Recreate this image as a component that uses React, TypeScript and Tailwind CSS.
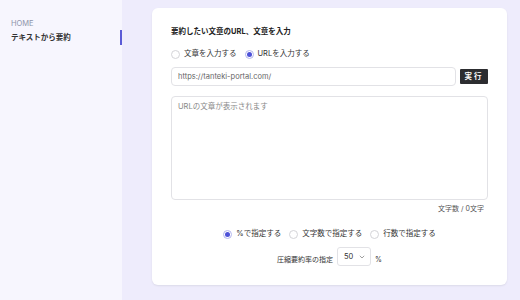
import React, { useState } from 'react';

const FONT = { fontFamily: '"Inter", "Noto Sans CJK JP", sans-serif' };

const Radio = ({ checked, label, onClick }: { checked: boolean; label: string; onClick: () => void }) => (
  <label className="flex items-center gap-[4px] cursor-pointer" onClick={onClick}>
    <span
      className={`w-[9px] h-[9px] rounded-full border flex items-center justify-center bg-white ${
        checked ? 'border-[#b3b5ee]' : 'border-[#d4d4d8]'
      }`}
    >
      {checked && <span className="w-[5px] h-[5px] rounded-full bg-[#4e52d8]" />}
    </span>
    <span className="text-[7.5px] text-[#333]">{label}</span>
  </label>
);

export default function App() {
  const [mode, setMode] = useState<'text' | 'url'>('url');
  const [unit, setUnit] = useState<'pct' | 'chars' | 'lines'>('pct');

  return (
    <div className="flex w-[520px] h-[300px] bg-[#eeecfc]" style={FONT}>
      {/* Sidebar */}
      <aside className="w-[122px] h-full bg-[#f7f6fe] pt-[19px] flex flex-col">
        <div className="pl-[11px] text-[7.5px] leading-[10px] text-[#8e94aa]">HOME</div>
        <div className="relative mt-[1px] h-[15px] flex items-center">
          <span className="pl-[11px] text-[7.5px] font-semibold text-[#333]">テキストから要約</span>
          <span className="absolute right-0 top-0 w-[2px] h-[15px] bg-[#5b5bd6]" />
        </div>
      </aside>

      {/* Main */}
      <main className="flex-1 pl-[30px] pt-[8px]">
        <div className="w-[355px] h-[277px] bg-white rounded-[6px] shadow-[0_1px_2px_rgba(0,0,0,0.08)] px-[19px] pt-[18px]">
          <h2 className="text-[7.5px] leading-[12px] font-bold text-[#222]">要約したい文章のURL、文章を入力</h2>

          <div className="flex items-center gap-[8px] mt-[11px] h-[10px]">
            <Radio checked={mode === 'text'} label="文章を入力する" onClick={() => setMode('text')} />
            <Radio checked={mode === 'url'} label="URLを入力する" onClick={() => setMode('url')} />
          </div>

          <div className="flex items-center gap-[4px] mt-[8px]">
            <input
              type="text"
              defaultValue="https://tanteki-portal.com/"
              className="w-[285px] h-[19px] border border-[#e2e2e6] rounded-[4px] px-[6px] text-[7.5px] text-[#666] outline-none"
            />
            <button className="w-[28px] h-[15px] bg-[#2c2d30] text-white text-[7.5px] font-semibold tracking-[2px] rounded-[1px] flex items-center justify-center">
              実行
            </button>
          </div>

          <textarea
            placeholder="URLの文章が表示されます"
            className="block w-[317px] h-[104px] mt-[10px] border border-[#e2e2e6] rounded-[4px] px-[6px] py-[4px] text-[7.5px] placeholder:text-[#888] outline-none resize-none"
          />

          <div className="text-right pr-[4px] mt-[4px] text-[7px] leading-[10px] text-[#555]">文字数 / 0文字</div>

          <div className="flex justify-center items-center gap-[8px] mt-[15px] h-[10px]">
            <Radio checked={unit === 'pct'} label="%で指定する" onClick={() => setUnit('pct')} />
            <Radio checked={unit === 'chars'} label="文字数で指定する" onClick={() => setUnit('chars')} />
            <Radio checked={unit === 'lines'} label="行数で指定する" onClick={() => setUnit('lines')} />
          </div>

          <div className="flex justify-center items-end gap-[4px] mt-[8px]">
            <span className="text-[7px] text-[#333] leading-[10px] mb-[1px]">圧縮要約率の指定</span>
            <div className="w-[34px] h-[19px] border border-[#e2e2e6] rounded-[3px] flex items-center pl-[6px] gap-[6px]">
              <span className="text-[7.5px] text-[#333]">50</span>
              <svg width="6" height="4" viewBox="0 0 6 4" fill="none">
                <path d="M0.8 0.8L3 3L5.2 0.8" stroke="#888" strokeWidth="0.8" />
              </svg>
            </div>
            <span className="text-[7px] text-[#333] leading-[10px] mb-[1px]">%</span>
          </div>
        </div>
      </main>
    </div>
  );
}
